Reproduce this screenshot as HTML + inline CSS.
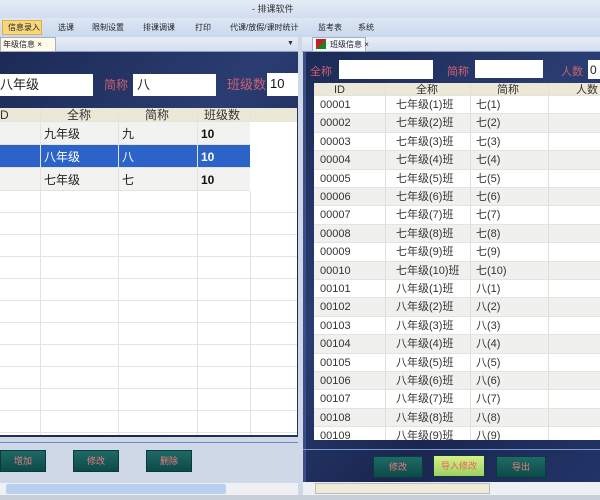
<!DOCTYPE html>
<html><head><meta charset="utf-8"><style>
*{margin:0;padding:0;box-sizing:border-box}
body{width:600px;height:500px;overflow:hidden;background:#cfd8e6;font-family:"Liberation Sans","Noto Sans CJK SC",sans-serif;position:relative}
.a{position:absolute}
.t{font-size:11px;white-space:nowrap;line-height:14px}
.dark{background:linear-gradient(135deg,#1c2a55 0%,#2a3d72 40%,#1a2650 70%,#223468 100%)}
.row{position:absolute;left:0;right:0;border-bottom:1px solid #e4e4dc}
.btn{position:absolute;height:22px;background:linear-gradient(#1e6a66,#0d4a4a);border:1px solid #0a3a3a;color:#f07a7a;font-size:9px;text-align:center;line-height:20px}
</style></head><body>
<div class="a" style="left:0;top:0;width:600px;height:18px;background:linear-gradient(#e4ecf7,#d2deee)"></div>
<div class="a t" style="left:252px;top:2px;font-size:9px;color:#333">- 排课软件</div>
<div class="a" style="left:0;top:18px;width:600px;height:19px;background:linear-gradient(#dde7f4,#c9d8ec)"></div>
<div class="a" style="left:2px;top:20px;width:40px;height:15px;background:#f8d77c;border:1px solid #e0b040"></div>
<div class="a t" style="left:8px;top:21px;font-size:8px;color:#223">信息录入</div>
<div class="a t" style="left:58px;top:21px;font-size:8px;color:#223">选课</div>
<div class="a t" style="left:92px;top:21px;font-size:8px;color:#223">限制设置</div>
<div class="a t" style="left:143px;top:21px;font-size:8px;color:#223">排课调课</div>
<div class="a t" style="left:195px;top:21px;font-size:8px;color:#223">打印</div>
<div class="a t" style="left:230px;top:21px;font-size:8px;color:#223">代课/放假/课时统计</div>
<div class="a t" style="left:318px;top:21px;font-size:8px;color:#223">监考表</div>
<div class="a t" style="left:358px;top:21px;font-size:8px;color:#223">系统</div>
<div class="a" style="left:0;top:37px;width:298px;height:15px;background:linear-gradient(#e8eef8,#d4deed);border-bottom:1px solid #8aa0c0"></div>
<div class="a" style="left:0;top:37px;width:56px;height:15px;background:#fffbe8;border:1px solid #a0b0c8"></div>
<div class="a t" style="left:3px;top:38px;font-size:8px;color:#223">年级信息 ×</div>
<div class="a t" style="left:287px;top:37px;font-size:7px;color:#333">▼</div>
<div class="a" style="left:302px;top:37px;width:298px;height:15px;background:linear-gradient(#e8eef8,#d4deed);border-bottom:1px solid #8aa0c0"></div>
<div class="a" style="left:312px;top:37px;width:54px;height:15px;background:#f4f7fb;border:1px solid #a0b0c8"></div>
<div class="a" style="left:316px;top:39px;width:10px;height:10px;background:linear-gradient(135deg,#c02020 50%,#208020 50%)"></div>
<div class="a t" style="left:330px;top:38px;font-size:8px;color:#223">班级信息 ×</div>
<div class="a dark" style="left:0;top:52px;width:298px;height:385px"></div>
<div class="a" style="left:0;top:74px;width:93px;height:22px;background:#fff"></div>
<div class="a t" style="left:0;top:78px;font-size:13px;color:#222">八年级</div>
<div class="a t" style="left:104px;top:78px;font-size:12px;color:#d06070">简称</div>
<div class="a" style="left:133px;top:74px;width:83px;height:22px;background:#fff"></div>
<div class="a t" style="left:137px;top:78px;font-size:13px;color:#222">八</div>
<div class="a t" style="left:227px;top:78px;font-size:13px;color:#d06070">班级数</div>
<div class="a" style="left:267px;top:73px;width:31px;height:23px;background:#fff"></div>
<div class="a t" style="left:270px;top:77px;font-size:13px;color:#111">10</div>
<div class="a" style="left:0;top:108px;width:297px;height:327px;background:#fff;overflow:hidden">
 <div class="row" style="top:0;height:14px;background:#ece8d8"></div>
 <div class="row" style="top:14px;height:23px;background:#f2f2f0"></div>
 <div class="row" style="top:37px;height:23px;background:#2c63c8"></div>
 <div class="row" style="top:60px;height:23px;background:#f2f2f0"></div>
 <div class="row" style="top:83px;height:22px"></div><div class="row" style="top:105px;height:22px"></div>
 <div class="row" style="top:127px;height:22px"></div><div class="row" style="top:149px;height:22px"></div>
 <div class="row" style="top:171px;height:22px"></div><div class="row" style="top:193px;height:22px"></div>
 <div class="row" style="top:215px;height:22px"></div><div class="row" style="top:237px;height:22px"></div>
 <div class="row" style="top:259px;height:22px"></div><div class="row" style="top:281px;height:22px"></div>
 <div class="row" style="top:303px;height:22px"></div>
 <div class="a" style="left:40px;top:0;width:1px;height:327px;background:#e4e4dc"></div>
 <div class="a" style="left:118px;top:0;width:1px;height:327px;background:#e4e4dc"></div>
 <div class="a" style="left:197px;top:0;width:1px;height:327px;background:#e4e4dc"></div>
 <div class="a" style="left:250px;top:0;width:1px;height:327px;background:#e4e4dc"></div>
 <div class="a" style="left:250px;top:14px;width:47px;height:69px;background:#fff"></div>
 <div class="a t" style="left:0;top:0;font-size:12px;color:#333">D</div>
 <div class="a t" style="left:67px;top:0;font-size:12px;color:#333">全称</div>
 <div class="a t" style="left:145px;top:0;font-size:12px;color:#333">简称</div>
 <div class="a t" style="left:204px;top:0;font-size:12px;color:#333">班级数</div>
 <div class="a t" style="left:44px;top:19px;font-size:12px;color:#222">九年级</div>
 <div class="a t" style="left:122px;top:19px;font-size:12px;color:#222">九</div>
 <div class="a t" style="left:201px;top:19px;font-size:12px;color:#111;font-weight:bold">10</div>
 <div class="a t" style="left:44px;top:42px;font-size:12px;color:#fff">八年级</div>
 <div class="a t" style="left:122px;top:42px;font-size:12px;color:#fff">八</div>
 <div class="a t" style="left:201px;top:42px;font-size:12px;color:#fff;font-weight:bold">10</div>
 <div class="a t" style="left:44px;top:65px;font-size:12px;color:#222">七年级</div>
 <div class="a t" style="left:122px;top:65px;font-size:12px;color:#222">七</div>
 <div class="a t" style="left:201px;top:65px;font-size:12px;color:#111;font-weight:bold">10</div>
</div>
<div class="a" style="left:0;top:442px;width:298px;height:1px;background:#6f8cc0"></div>
<div class="btn" style="left:0;top:450px;width:46px">增加</div>
<div class="btn" style="left:73px;top:450px;width:46px">修改</div>
<div class="btn" style="left:146px;top:450px;width:46px">删除</div>
<div class="a" style="left:0;top:483px;width:298px;height:12px;background:#eef0f4"></div>
<div class="a" style="left:6px;top:484px;width:220px;height:10px;background:#b8cff0;border-radius:2px"></div>
<div class="a dark" style="left:303px;top:52px;width:297px;height:430px;border-left:3px solid #3a4f8a"></div>
<div class="a t" style="left:310px;top:65px;font-size:11px;color:#d06070">全称</div>
<div class="a" style="left:339px;top:60px;width:94px;height:19px;background:#fff"></div>
<div class="a t" style="left:447px;top:65px;font-size:11px;color:#d06070">简称</div>
<div class="a" style="left:475px;top:60px;width:68px;height:18px;background:#fff"></div>
<div class="a t" style="left:561px;top:65px;font-size:11px;color:#d06070">人数</div>
<div class="a" style="left:588px;top:60px;width:12px;height:19px;background:#fff"></div>
<div class="a t" style="left:590px;top:63px;font-size:12px;color:#222">0</div>
<div class="a" id="rt" style="left:314px;top:83px;width:286px;height:357px;background:#fff;overflow:hidden"></div>
<div class="a" style="left:303px;top:449px;width:297px;height:1px;background:#7a9ad0"></div>
<div class="btn" style="left:373px;top:456px;width:50px">修改</div>
<div class="btn" style="left:433px;top:455px;width:52px;background:linear-gradient(#d8f08a,#9bd060);color:#e86060">导入修改</div>
<div class="btn" style="left:496px;top:456px;width:50px">导出</div>
<div class="a" style="left:303px;top:482px;width:297px;height:13px;background:#eef0f4"></div>
<div class="a" style="left:315px;top:483px;width:175px;height:11px;background:#efebd8;border:1px solid #bbb"></div>
<div class="a" style="left:0;top:495px;width:600px;height:5px;background:#c8cfd8"></div>
<script>
var h='<div class="row" style="top:0;height:13px;background:#ece8d8"></div>'+
'<div class="a t" style="left:20px;top:0;font-size:11px;color:#333">ID</div>'+
'<div class="a t" style="left:102px;top:0;font-size:11px;color:#333">全称</div>'+
'<div class="a t" style="left:183px;top:0;font-size:11px;color:#333">简称</div>'+
'<div class="a t" style="left:262px;top:0;font-size:11px;color:#333">人数</div>';
var cn=['七','八'];
for(var i=0;i<19;i++){var g=i<10?0:1,n=g?i-9:i+1;var y=Math.round(13+i*18.4);var y2=Math.round(13+(i+1)*18.4);
h+='<div class="row" style="top:'+y+'px;height:'+(y2-y)+'px;background:'+(i%2?'#f0f0ee':'#fff')+'"></div>';
var id=g?'0010'+n:(n<10?'0000'+n:'000'+n);
h+='<div class="a t" style="left:6px;top:'+(y+2)+'px;color:#333">'+id+'</div>';
h+='<div class="a t" style="left:82px;top:'+(y+2)+'px;color:#333">'+cn[g]+'年级('+n+')班</div>';
h+='<div class="a t" style="left:162px;top:'+(y+2)+'px;color:#333">'+cn[g]+'('+n+')</div>';}
h+='<div class="a" style="left:71px;top:0;width:1px;height:357px;background:#e0e0d8"></div><div class="a" style="left:156px;top:0;width:1px;height:357px;background:#e0e0d8"></div><div class="a" style="left:234px;top:0;width:1px;height:357px;background:#e0e0d8"></div>';
document.getElementById('rt').innerHTML=h;
</script>
</body></html>
